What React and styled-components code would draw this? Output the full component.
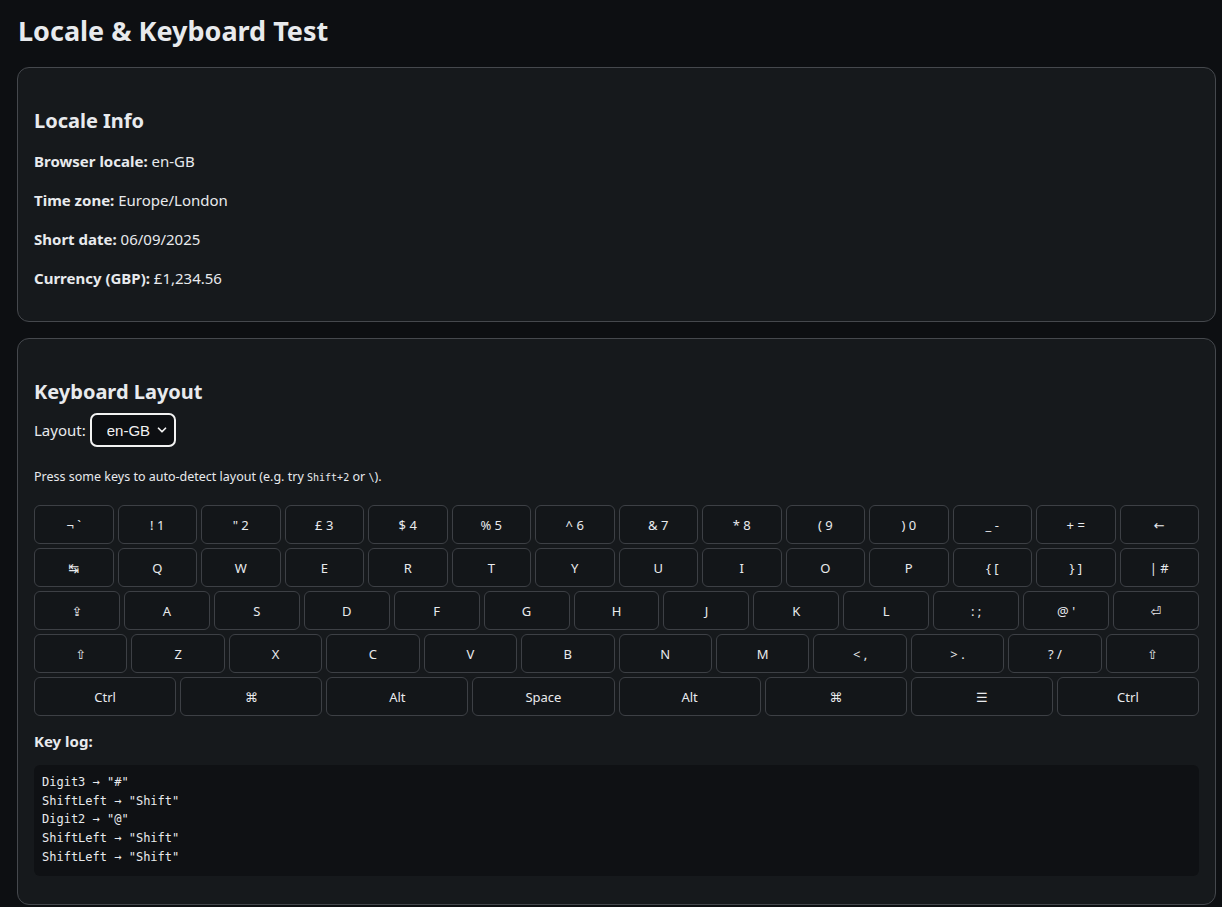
import React, { useState } from "react";
import styled, { createGlobalStyle } from "styled-components";
import { ChevronDown } from "lucide-react";

const GlobalStyle = createGlobalStyle`
  html, body {
    margin: 0;
    background: #0d0f12;
    color: #e8eaed;
    font-family: "Noto Sans", "Open Sans", sans-serif;
  }
`;

const Page = styled.div`
  padding: 0 6px 4px 17px;
`;

const Title = styled.h1`
  margin: 0;
  padding: 14px 0 19px 1px;
  font-size: 27px;
  line-height: 34px;
  font-weight: 700;
`;

const Card = styled.section`
  background: #16191c;
  border: 1px solid #45484d;
  border-radius: 12px;
  padding: 36px 16px ${(p) => p.$bottom || 16}px;
  margin-bottom: 16px;
`;

const CardTitle = styled.h2`
  margin: 0 0 ${(p) => p.$gap || 12}px;
  font-size: 20px;
  line-height: 34px;
  font-weight: 700;
`;

const InfoLine = styled.p`
  margin: 0;
  font-size: 15px;
  line-height: 39px;

  b {
    font-weight: 700;
  }
`;

const LayoutRow = styled.div`
  display: flex;
  align-items: center;
  gap: 4px;
  font-size: 15px;
`;

const SelectWrap = styled.div`
  position: relative;
  display: inline-flex;
`;

const Select = styled.select`
  appearance: none;
  width: 86px;
  height: 34px;
  padding: 0 24px 0 15px;
  border: 2px solid #f2f2f2;
  border-radius: 7px;
  background: #0d0f12;
  color: #f2f2f2;
  font-family: "Liberation Sans", Arial, sans-serif;
  font-size: 15px;
  outline: none;
`;

const Chevron = styled(ChevronDown)`
  position: absolute;
  right: 7px;
  top: 50%;
  transform: translateY(-50%);
  pointer-events: none;
  color: #f2f2f2;
`;

const Hint = styled.p`
  margin: 20px 0 17px;
  font-size: 12.5px;
  line-height: 20px;

  code {
    font-family: "DejaVu Sans Mono", monospace;
    font-size: 10px;
  }
`;

const Keyboard = styled.div`
  display: flex;
  flex-direction: column;
  gap: 4px;
`;

const KeyRow = styled.div`
  display: flex;
  gap: 4px;
`;

const Key = styled.button`
  flex: 1;
  min-width: 0;
  height: 39px;
  padding: 0;
  background: #131619;
  border: 1px solid #3d4045;
  border-radius: 6px;
  color: #e8eaed;
  font-family: "Noto Sans", "DejaVu Sans", sans-serif;
  font-size: 13px;
  cursor: pointer;
  white-space: pre;

  &:hover {
    background: #1d2125;
  }
`;

const LogLabel = styled.p`
  margin: 15px 0 14px;
  font-size: 15px;
  font-weight: 700;
  line-height: 20px;
`;

const Log = styled.pre`
  margin: 0 0 12px;
  padding: 8px 8px 9px;
  background: #0f1114;
  border-radius: 6px;
  font-family: "DejaVu Sans Mono", monospace;
  font-size: 12px;
  line-height: 18.7px;
  color: #e8eaed;
`;

const rows = [
  ["¬ `", "! 1", "\" 2", "£ 3", "$ 4", "% 5", "^ 6", "& 7", "* 8", "( 9", ") 0", "_ -", "+ =", "←"],
  ["↹", "Q", "W", "E", "R", "T", "Y", "U", "I", "O", "P", "{ [", "} ]", "| #"],
  ["⇪", "A", "S", "D", "F", "G", "H", "J", "K", "L", ": ;", "@ '", "⏎"],
  ["⇧", "Z", "X", "C", "V", "B", "N", "M", "< ,", "> .", "? /", "⇧"],
  ["Ctrl", "⌘", "Alt", "Space", "Alt", "⌘", "☰", "Ctrl"],
];

const initialLog = [
  'Digit3 → "#"',
  'ShiftLeft → "Shift"',
  'Digit2 → "@"',
  'ShiftLeft → "Shift"',
  'ShiftLeft → "Shift"',
];

export default function App() {
  const [layout, setLayout] = useState("en-GB");

  return (
    <>
      <GlobalStyle />
      <Page>
        <Title>Locale &amp; Keyboard Test</Title>

        <Card $bottom={23}>
          <CardTitle $gap={4}>Locale Info</CardTitle>
          <InfoLine>
            <b>Browser locale:</b> en-GB
          </InfoLine>
          <InfoLine>
            <b>Time zone:</b> Europe/London
          </InfoLine>
          <InfoLine>
            <b>Short date:</b> 06/09/2025
          </InfoLine>
          <InfoLine>
            <b>Currency (GBP):</b> £1,234.56
          </InfoLine>
        </Card>

        <Card>
          <CardTitle $gap={4}>Keyboard Layout</CardTitle>
          <LayoutRow>
            Layout:
            <SelectWrap>
              <Select value={layout} onChange={(e) => setLayout(e.target.value)}>
                <option>en-GB</option>
                <option>en-US</option>
                <option>de-DE</option>
                <option>fr-FR</option>
              </Select>
              <Chevron size={14} strokeWidth={3} />
            </SelectWrap>
          </LayoutRow>
          <Hint>
            Press some keys to auto-detect layout (e.g. try <code>Shift+2</code> or <code>\</code>).
          </Hint>
          <Keyboard>
            {rows.map((row, i) => (
              <KeyRow key={i}>
                {row.map((k, j) => (
                  <Key key={j}>{k}</Key>
                ))}
              </KeyRow>
            ))}
          </Keyboard>
          <LogLabel>Key log:</LogLabel>
          <Log>{initialLog.join("\n")}</Log>
        </Card>
      </Page>
    </>
  );
}
